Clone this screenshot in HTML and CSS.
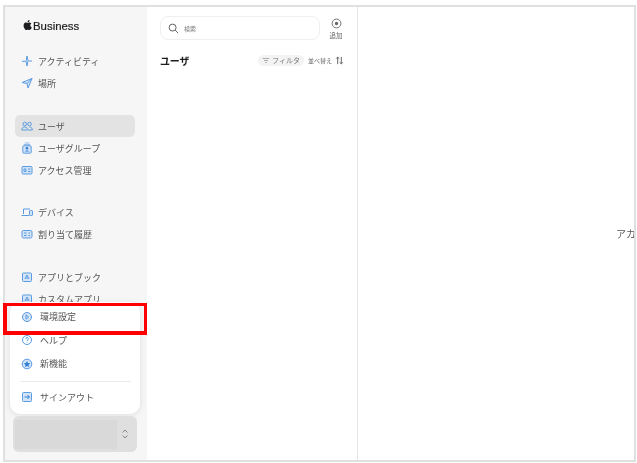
FILE: index.html
```html
<!DOCTYPE html>
<html lang="ja">
<head>
<meta charset="utf-8">
<title>Apple Business</title>
<link rel="stylesheet" href="styles.css">
</head>
<body>
<div class="frame">
  <aside class="sidebar">
    <div class="brand">
      <svg class="apple" viewBox="0 0 14 16"><path d="M10.2 8.500c0-1.700 1.400-2.500 1.500-2.600-.8-1.200-2.100-1.300-2.500-1.400-1.100-.1-2.100.6-2.600.6-.6 0-1.400-.6-2.300-.6-1.200 0-2.300.7-2.900 1.700-1.200 2.200-.3 5.400.9 7.100.6.9 1.300 1.800 2.200 1.800.9 0 1.200-.6 2.300-.6s1.400.6 2.300.6c1 0 1.600-.9 2.200-1.700.7-1 1-2 1-2-.1-.1-2.100-.8-2.100-2.900zM8.400 3.300c.5-.6.8-1.400.7-2.300-.7 0-1.600.5-2.100 1.100-.5.5-.9 1.400-.8 2.200.8.1 1.700-.4 2.200-1z"/></svg>
      <span>Business</span>
    </div>
    <nav class="nav">
      <ul class="group">
        <li class="item"><svg class="ico" viewBox="0 0 12 12"><path d="M6 1 7 5.500 6 11 5 6.500zM1 6.300h3.500M7.500 6h3.500"/></svg>アクティビティ</li>
        <li class="item"><svg class="ico" viewBox="0 0 12 12"><path class="tint" d="M1 5.500 11 1.500 7 11 6 6.500z"/><path d="M6 6.500 11 1.500"/></svg>場所</li>
      </ul>
      <ul class="group">
        <li class="item active"><svg class="ico" viewBox="0 0 12 12"><circle cx="3.700" cy="4" r="1.800"/><circle cx="8.500" cy="4" r="1.800"/><path d="M.8 10c0-2 1-3 3-3 1.500 0 2.500.5 2.500 3zM8.300 7c2 0 3 1 3 3H7"/></svg>ユーザ</li>
        <li class="item"><svg class="ico" viewBox="0 0 12 12"><rect class="tint" x="1.800" y="3.800" width="8.400" height="7.400" rx="1"/><path class="soft" d="M3.800 1h4.400M2.800 2.500h6.400"/><circle class="fill" cx="6" cy="6.200" r="1.300"/><path class="fill" d="M3.800 9.500c.3-1.500 4.100-1.500 4.400 0z"/></svg>ユーザグループ</li>
        <li class="item"><svg class="ico" viewBox="0 0 12 12"><rect class="tint" x="1" y="2.500" width="10" height="7.500" rx="1"/><path d="M3 5h2v2.500H3zM7 5h2.500M7 7.500h2.500"/></svg>アクセス管理</li>
      </ul>
      <ul class="group tight">
        <li class="item"><svg class="ico" viewBox="0 0 12 12"><path d="M2.500 8V3h6.500M.5 9.500h7.500"/><rect class="tint" x="8.500" y="4.500" width="3" height="5" rx=".7"/></svg>デバイス</li>
        <li class="item"><svg class="ico" viewBox="0 0 12 12"><rect class="tint" x="1" y="2.500" width="10" height="7.500" rx="1.500"/><path d="M3 5h2.500M3 7.500h2.500M7.500 5h1.500M7.500 7.500h1.500"/></svg>割り当て履歴</li>
      </ul>
      <ul class="group">
        <li class="item"><svg class="ico" viewBox="0 0 12 12"><rect class="tint" x="1.500" y="2" width="9" height="8.500" rx="1"/><path d="M4 8 6 4l2 4M4.800 7h2.400"/></svg>アプリとブック</li>
        <li class="item"><svg class="ico" viewBox="0 0 12 12"><rect class="tint" x="1.500" y="2" width="9" height="8.500" rx="1"/><path d="M4 8 6 4l2 4M4.800 7h2.400"/></svg>カスタムアプリ</li>
      </ul>
    </nav>
    <div class="popup">
      <div class="pop-item"><svg class="ico" viewBox="0 0 12 12"><circle class="tint" cx="6" cy="6" r="4.500"/><path d="M5 3.800 7.500 6 5 8.200z"/></svg>環境設定</div>
      <div class="pop-item"><svg class="ico" viewBox="0 0 12 12"><circle cx="6" cy="6" r="4.500"/><path d="M4.700 4.800c0-1.700 2.700-1.700 2.700 0 0 1-1.400 1-1.400 2.200M6 8.300v.4"/></svg>ヘルプ</div>
      <div class="pop-item"><svg class="ico" viewBox="0 0 12 12"><circle class="tint" cx="6" cy="6" r="4.800"/><path class="fill" d="m6 2.800 1 2.100 2.300.3-1.700 1.600.4 2.300-2-1.100-2 1.100.4-2.300-1.700-1.600 2.300-.3z"/></svg>新機能</div>
      <hr class="pop-rule">
      <div class="pop-item"><svg class="ico" viewBox="0 0 12 12"><rect class="tint" x="1.500" y="1.500" width="9" height="9" rx="1"/><path class="dark" d="M3.500 6h5M6.500 4l2 2-2 2"/></svg>サインアウト</div>
    </div>
    <div class="account">
      <div class="account-mask"></div>
      <svg class="chev" viewBox="0 0 8 12"><path d="M1.500 4.500 4 2l2.500 2.500M1.500 7.500 4 10l2.500-2.500"/></svg>
    </div>
  </aside>
  <section class="list">
    <div class="tools">
      <div class="search">
        <svg class="search-ico" viewBox="0 0 12 12"><circle cx="5" cy="5" r="3.800"/><path d="m8 8 3 3"/></svg>
        <span>検索</span>
      </div>
      <div class="add">
        <svg viewBox="0 0 12 12"><circle class="ring" cx="6" cy="6" r="4.800"/><circle class="dot" cx="6" cy="6" r="1.800"/></svg>
        <span>追加</span>
      </div>
    </div>
    <div class="heading">
      <h1>ユーザ</h1>
      <span class="filter"><svg viewBox="0 0 10 8"><path d="M1 1.500h8M2.500 4h5M4 6.500h2"/></svg>フィルタ</span>
      <span class="sort">並べ替え <svg viewBox="0 0 10 10"><path d="M3 9V1.500M1.200 3 3 1.200 4.800 3M7 1v7.500M5.200 7 7 8.800 8.800 7"/></svg></span>
    </div>
  </section>
  <main class="detail"><span>アカウントを選択</span></main>
  <div class="highlight"></div>
</div>
</body>
</html>
```
FILE: styles.css
```css
* { box-sizing: border-box; }
html, body { margin: 0; height: 100%; background: #fff; overflow: hidden; }
body { padding: 5px 1px 1px 3px; font-family: "Noto Sans CJK JP", "Liberation Sans", sans-serif; color: #555; }
ul { list-style: none; margin: 0; padding: 0; }
svg { display: block; flex: none; }

.frame { position: relative; display: flex; width: 633px; height: 457px; border: 2px solid #e0e0e0; background: #fff; }

.sidebar, .list, .detail { filter: blur(.35px); }

.sidebar { position: relative; width: 142px; flex: none; background: #f6f6f6; padding: 11px 12px 0 10px; }
.brand { display: flex; align-items: center; height: 16px; padding-left: 8px; color: #1d1d1f; font: 11.400px "Liberation Sans", sans-serif; -webkit-text-stroke: .2px #1d1d1f; }
.apple { width: 10px; height: 12px; fill: #1d1d1f; margin-top: -2px; }
.nav { margin-top: 16px; display: flex; flex-direction: column; gap: 21px; }
.group.tight { margin-top: -1px; }
.item { display: flex; align-items: center; gap: 5px; height: 22px; padding-left: 6px; font-size: 9px; border-radius: 5px; white-space: nowrap; }
.item.active { background: #e3e3e3; }
.ico { width: 12px; height: 12px; fill: none; stroke: #5a9be2; stroke-width: 1; }
.ico .tint { fill: #d3e4f7; }
.ico .fill { fill: #2f7fd6; stroke: none; }
.ico .soft { stroke: #8fbcec; }
.ico .dark { stroke: #2f7fd6; }

.popup { position: absolute; left: 5px; top: 295px; width: 130px; height: 112px; background: #fff; border-radius: 10px; box-shadow: 0 1px 6px rgba(0,0,0,.1); padding: 3px 7px 0; }
.pop-item { display: flex; align-items: center; gap: 7px; height: 23.500px; padding-left: 4px; font-size: 9px; white-space: nowrap; }
.pop-rule { height: 1px; margin: 5px 2px 4px 3px; border: 0; background: #ebebeb; }

.account { position: absolute; left: 8px; top: 409px; width: 124px; height: 36px; background: #dfdfe0; border-radius: 6px; padding: 4px 0 3px 2px; }
.account-mask { width: 102px; height: 100%; background: #d9d9d9; }
.chev { position: absolute; right: 8px; top: 12px; width: 8px; height: 12px; fill: none; stroke: #888; stroke-width: 1; }

.list { width: 211px; flex: none; border-right: 1px solid #e6e6e6; padding: 9px 13px 0 13px; }
.tools { display: flex; align-items: flex-start; }
.search { display: flex; align-items: center; gap: 5px; width: 161px; height: 24px; padding-left: 7px; border: 1px solid #efefef; border-radius: 8px; font-size: 6px; color: #777; }
.search-ico { width: 11px; height: 11px; fill: none; stroke: #555; stroke-width: 1; }
.add { margin-left: 8px; width: 16px; display: flex; flex-direction: column; align-items: center; font-size: 6.500px; color: #666; line-height: 10px; padding-top: 2px; }
.add svg { width: 11px; height: 11px; margin-bottom: 1px; }
.ring { fill: none; stroke: #666; stroke-width: 1; }
.dot { fill: #666; }
.heading { display: flex; align-items: center; height: 16px; margin-top: 12px; }
h1 { margin: 0; font-size: 10px; font-weight: 700; color: #1d1d1f; letter-spacing: -.2px; margin-right: auto; }
.filter { display: flex; align-items: center; gap: 2px; height: 11px; padding: 0 4px; background: #f3f3f3; border-radius: 6px; font-size: 7px; color: #777; white-space: nowrap; margin-right: 1px; }
.filter svg { width: 8px; height: 7px; fill: none; stroke: #999; stroke-width: 1; }
.sort { display: flex; align-items: center; gap: 3px; margin-left: 3px; font-size: 6px; color: #666; white-space: nowrap; }
.sort svg { width: 9px; height: 9px; fill: none; stroke: #555; stroke-width: 1; }

.detail { flex: 1; min-width: 0; display: flex; align-items: center; overflow: hidden; padding-left: 258px; padding-bottom: 1px; }
.detail span { font-size: 10px; color: #555; white-space: nowrap; }

.highlight { position: absolute; left: -2px; top: 296px; width: 144px; height: 32px; border-style: solid; border-color: #f00; border-width: 3px 3px 4px 4px; }
```
